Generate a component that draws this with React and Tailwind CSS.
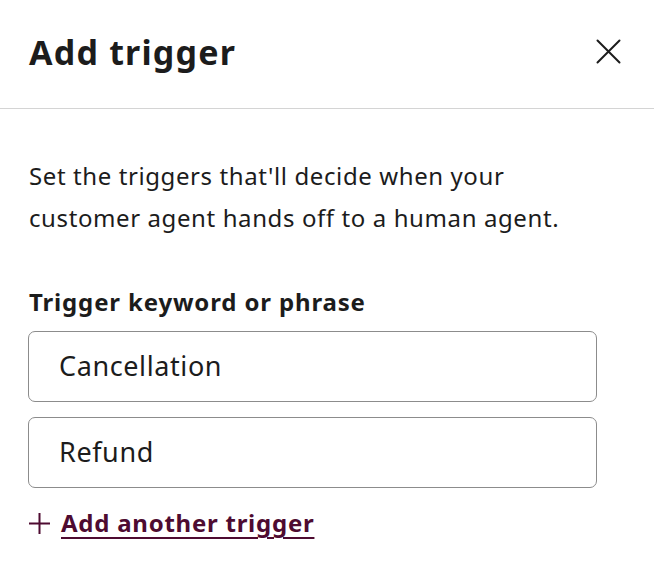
const triggers = ['Cancellation', 'Refund']

export default function App() {
  return (
    <div className="w-[654px] h-[562px] bg-white text-[#1c1c1c] overflow-hidden" style={{ fontFamily: '"Noto Sans", "DejaVu Sans", sans-serif' }}>
      {/* header */}
      <div className="h-[109px] flex items-center justify-between pl-[29px] pr-[33px] border-b border-[#d4d4d4]">
        <h1 className="text-[34px] font-bold leading-none tracking-[1.2px] -mt-[5px]">Add trigger</h1>
        <button className="-mt-[6px] text-[#1c1c1c]">
          <svg width="25" height="25" viewBox="0 0 25 25" fill="none" stroke="currentColor" strokeWidth="2" strokeLinecap="round">
            <path d="M1.5 1.5 L23.5 23.5 M23.5 1.5 L1.5 23.5" />
          </svg>
        </button>
      </div>

      {/* body */}
      <div className="px-[28px] pt-[46px]">
        <p className="text-[24px] leading-[42px] pl-[1px] max-w-[580px] tracking-[0.6px]">
          Set the triggers that'll decide when your<br />customer agent hands off to a human agent.
        </p>

        <div className="mt-[47px]">
          <label className="block text-[24px] font-bold leading-[32px] pl-[1px] tracking-[0.85px]">Trigger keyword or phrase</label>
          <div className="mt-[13px] flex flex-col gap-[15px] w-[569px]">
            {triggers.map((t) => (
              <div key={t} className="h-[71px] flex items-center px-[30px] border border-[#8c8c8c] rounded-[7px] text-[27px] tracking-[0.6px]">
                {t}
              </div>
            ))}
          </div>
          <a href="#" className="mt-[17px] flex items-center gap-[10px] text-[#4e0b31]">
            <svg width="23" height="23" viewBox="0 0 23 23" fill="none" stroke="currentColor" strokeWidth="2">
              <path d="M11.5 1 V22 M1 11.5 H22" />
            </svg>
            <span className="text-[24px] font-bold underline underline-offset-[5px] decoration-[2px] tracking-[0.75px]">Add another trigger</span>
          </a>
        </div>
      </div>
    </div>
  )
}
